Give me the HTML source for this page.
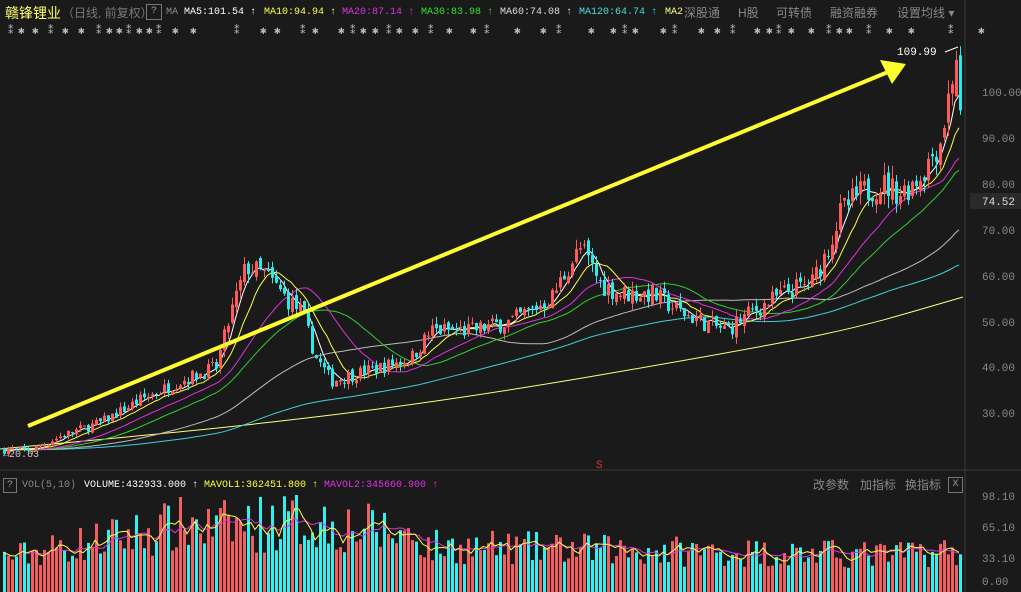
<!DOCTYPE html><html><head><meta charset="utf-8"><style>
body{margin:0;background:#1a1a1a;width:1021px;height:592px;overflow:hidden;font-family:"Liberation Mono","Noto Sans CJK SC",monospace;}
.t{position:absolute;white-space:nowrap;font-size:10px;}
.cj{font-family:"Liberation Sans","Noto Sans CJK SC",sans-serif;font-size:12px;color:#888;top:4px}
</style></head><body>
<div class="t cj" style="left:5px;top:3px;font-size:14px;color:#ffff66">赣锋锂业</div>
<div class="t cj" style="left:62px;color:#777">（日线, 前复权）</div>
<div class="t" style="left:146px;top:4px;width:14px;height:14px;border:1px solid #777;color:#999;text-align:center;line-height:14px">?</div>
<div class="t" style="left:166px;top:7px;color:#888">MA</div>
<div class="t" style="left:184px;top:7px;color:#fff">MA5:101.54 ↑</div>
<div class="t" style="left:264px;top:7px;color:#ffff40">MA10:94.94 ↑</div>
<div class="t" style="left:342px;top:7px;color:#e030e0">MA20:87.14 ↑</div>
<div class="t" style="left:421px;top:7px;color:#30e030">MA30:83.98 ↑</div>
<div class="t" style="left:500px;top:7px;color:#ddd">MA60:74.08 ↑</div>
<div class="t" style="left:579px;top:7px;color:#40e0e0">MA120:64.74 ↑</div>
<div class="t" style="left:665px;top:7px;color:#ffff80">MA2</div>
<div class="t cj" style="left:684px">深股通</div>
<div class="t cj" style="left:738px">H股</div>
<div class="t cj" style="left:776px">可转债</div>
<div class="t cj" style="left:830px">融资融券</div>
<div class="t cj" style="left:897px">设置均线 ▾</div>
<svg id="s" width="1021" height="592" style="position:absolute;left:0;top:0" font-family="Liberation Mono, monospace" font-size="11"></svg>
<div class="t" style="left:3px;top:478px;width:12px;height:13px;border:1px solid #777;color:#999;text-align:center;line-height:13px">?</div>
<div class="t" style="left:22px;top:480px;color:#888">VOL(5,10)</div>
<div class="t" style="left:84px;top:480px;color:#fff">VOLUME:432933.000 ↑</div>
<div class="t" style="left:204px;top:480px;color:#ffff40">MAVOL1:362451.800 ↑</div>
<div class="t" style="left:324px;top:480px;color:#e030e0">MAVOL2:345660.900 ↑</div>
<div class="t cj" style="left:813px;top:476px">改参数</div>
<div class="t cj" style="left:860px;top:476px">加指标</div>
<div class="t cj" style="left:905px;top:476px">换指标</div>
<div class="t" style="left:948px;top:477px;width:13px;height:14px;border:1px solid #777;color:#999;text-align:center;line-height:14px">X</div>
<script>
var s=document.getElementById('s'),h='';
function P(v){return 92+(100-v)*4.586;}
var kp=[[0,22],[30,22],[60,25],[100,28],[140,33],[180,37],[215,40],[230,52],[245,62],[265,60],[285,55],[300,52],[315,42],[330,37],[345,38],[380,40],[410,42],[430,48],[470,48],[510,50],[550,55],[570,63],[580,66],[600,58],[620,56],[650,56],[680,52],[700,50],[725,48],[750,52],[790,57],[810,58],[825,65],[840,74],[860,78],[880,80],[900,78],[920,82],[940,90],[952,105],[958,108],[963,97]];
function f(x){for(var i=1;i<kp.length;i++)if(x<=kp[i][0]){var a=kp[i-1],b=kp[i],t=(x-a[0])/(b[0]-a[0]);return a[1]+(b[1]-a[1])*t;}return kp[kp.length-1][1];}
var seed=7;function r(){seed=(seed*16807)%2147483647;return seed/2147483647;}
// stars row
var st=[8,18,32,48,62,78,96,106,116,126,136,146,156,172,190,234,260,274,300,312,338,350,360,372,386,396,412,428,446,470,484,514,540,556,588,610,622,632,660,672,698,714,730,754,766,776,788,808,826,836,846,866,886,908,948,978];
st.forEach(function(x,i){h+='<text x="'+x+'" y="34" fill="#bbb" font-size="11">'+(i%3==0?'⁑':'✱')+'</text>';});
var N=240,C=[],O=[],H=[],L=[],V=[],X=[];
var prev=22;
for(var i=0;i<N;i++){var x=3+i*4;X.push(x);var tg=f(x);var c=tg*(1+(r()-0.5)*0.08);var o=prev*(1+(r()-0.5)*0.03);
O.push(o);C.push(c);H.push(Math.max(o,c)*(1+r()*0.035));L.push(Math.min(o,c)*(1-r()*0.035));prev=c;
var base=x<200?25+x*0.2:x<420?65+(x-280)*0.1-Math.max(0,x-300)*0.25:x<900?38-(x-420)*0.02:32;base=Math.max(18,Math.min(75,base));
V.push(Math.max(6,base*(0.5+r()*1.1)));}
C[N-1]=96;O[N-1]=108;H[N-1]=109.99;L[N-1]=95;C[N-2]=107;O[N-2]=99;H[N-2]=109;
h+='<line x1="965" y1="0" x2="965" y2="592" stroke="#3a3a3a"/>';
h+='<line x1="0" y1="470" x2="1021" y2="470" stroke="#3a3a3a"/>';
[[100,92],[90,138],[80,184],[70,230],[60,276],[50,322],[40,367],[30,413]].forEach(function(a){h+='<text x="982" y="'+(a[1]+4)+'" fill="#888">'+a[0].toFixed(2)+'</text>';});
h+='<rect x="970" y="193" width="51" height="16" fill="#2a2a2a"/><text x="982" y="205" fill="#ddd">74.52</text>';
[[98.1,496],[65.1,527],[33.1,558],[0,581]].forEach(function(a){h+='<text x="982" y="'+(a[1]+4)+'" fill="#888">'+a[0].toFixed(2)+'</text>';});
function ma(n){var out=[];for(var i=0;i<N;i++){var s2=0;for(var j=i-n+1;j<=i;j++)s2+=(j<0?22:C[j]);out.push(s2/n);}return out;}
function line(arr,col,ys){var p='';for(var i=0;i<N;i++)p+=(i?'L':'M')+X[i]+' '+ys(arr[i]).toFixed(1);return '<path d="'+p+'" fill="none" stroke="'+col+'" stroke-width="1"/>';}
h+='<path d="M0 449 C200 430 350 418 600 375 S850 330 963 297" fill="none" stroke="#ffff80"/>';
[[120,'#40d0e0'],[60,'#bbb'],[30,'#30d030'],[20,'#e030e0'],[10,'#ffff40'],[5,'#fff']].forEach(function(m){h+=line(ma(m[0]),m[1],P);});
for(var i=0;i<N;i++){var up=C[i]>=O[i],col=up?'#ff5a5a':'#30e8e8';var x=X[i];
h+='<line x1="'+(x+1.5)+'" y1="'+P(H[i])+'" x2="'+(x+1.5)+'" y2="'+P(L[i])+'" stroke="'+col+'"/>';
var y1=P(Math.max(O[i],C[i])),hh=Math.max(1,P(Math.min(O[i],C[i]))-y1);
h+='<rect x="'+x+'" y="'+y1+'" width="3" height="'+hh+'" fill="'+col+'"/>';}
h+='<line x1="28" y1="426" x2="888" y2="72" stroke="#ffff30" stroke-width="4"/><polygon points="906,64 880,60 892,84" fill="#ffff30"/>';
h+='<text x="897" y="55" fill="#fff" font-size="11">109.99</text><line x1="945" y1="52" x2="958" y2="47" stroke="#fff"/>';
h+='<text x="3" y="457" fill="#ccc" font-size="10">←20.63</text><text x="596" y="468" fill="#e03030" font-size="11">S</text>';
function VY(v){return 581-v*0.867;}
for(var i=0;i<N;i++){var up=C[i]>=O[i];var y=Math.max(495,VY(V[i]));h+='<rect x="'+X[i]+'" y="'+y+'" width="3" height="'+(592-y)+'" fill="'+(up?'#f06060':'#30f0f0')+'"/>';}
function vma(n){var o=[];for(var i=0;i<N;i++){var s2=0,c=0;for(var j=Math.max(0,i-n+1);j<=i;j++){s2+=V[j];c++;}o.push(s2/c);}return o;}
h+=line(vma(10),'#e030e0',VY);h+=line(vma(5),'#ffff40',VY);
s.innerHTML=h;
</script>
</body></html>
